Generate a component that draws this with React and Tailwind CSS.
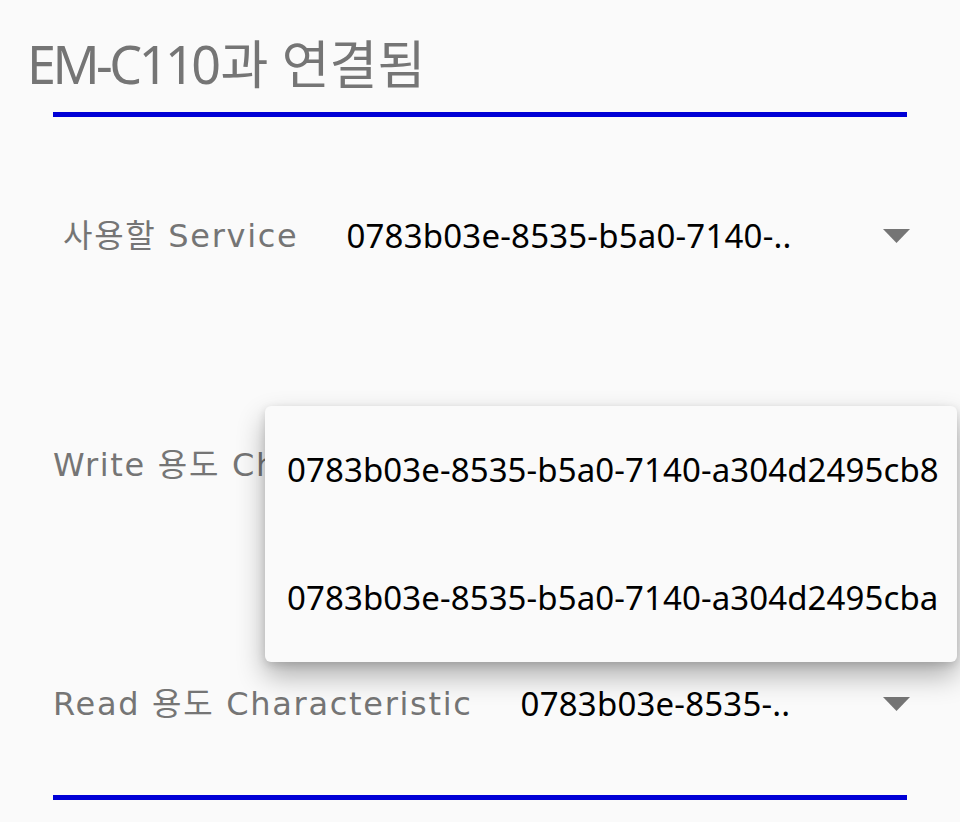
import React from "react";

function Arrow() {
  return (
    <svg width="27" height="14" viewBox="0 0 27 14" className="ml-auto shrink-0">
      <path d="M0 0 L27 0 L13.5 14 Z" fill="#757575" />
    </svg>
  );
}

function Row({ label, value, className, labelClass = "" }) {
  return (
    <div className={"flex items-center h-[70px] w-[857px] ml-[53px] " + className}>
      <span
        className={
          "text-[32px] leading-[70px] text-[#757575] tracking-[1.7px] whitespace-nowrap font-['DejaVu_Sans','Noto_Sans_CJK_KR',sans-serif] " +
          labelClass
        }
      >
        {label}
      </span>
      {value && (
        <span className="ml-[48px] text-[33px] leading-[70px] text-black tracking-[0.2px] whitespace-nowrap">
          {value}
        </span>
      )}
      <Arrow />
    </div>
  );
}

export default function App() {
  return (
    <div className="relative w-[960px] h-[822px] overflow-hidden bg-[#fafafa] font-['Noto_Sans','Noto_Sans_CJK_KR',sans-serif]">
      <div className="pt-[38px] pl-[27px] h-[90px]">
        <div className="text-[52px] leading-[52px] h-[52px] text-[#757575] whitespace-nowrap">
          <span className="tracking-[-3.5px]">EM-C110</span>
          <span className="ml-[3px]">과 연결됨</span>
        </div>
      </div>
      <div className="mt-[22px] ml-[53px] w-[854px] h-[5px] bg-[#0000d6]" />

      <Row className="mt-[84px]" labelClass="ml-[10px]" label="사용할 Service" value="0783b03e-8535-b5a0-7140-.." />
      <Row className="mt-[159px]" label="Write 용도 Characteristic" value="0783b03e-8535-.." />
      <Row className="mt-[169px]" label="Read 용도 Characteristic" value="0783b03e-8535-.." />

      <div className="mt-[56px] ml-[53px] w-[854px] h-[5px] bg-[#0000d6]" />

      <div className="absolute left-[265px] top-[406px] w-[692px] rounded-[6px] bg-[#fafafa] shadow-[0_14px_28px_rgba(0,0,0,0.3),0_3px_10px_rgba(0,0,0,0.14)]">
        {["0783b03e-8535-b5a0-7140-a304d2495cb8", "0783b03e-8535-b5a0-7140-a304d2495cba"].map((t) => (
          <div key={t} className="h-[128px] flex items-center pl-[22px] text-[33px] text-black tracking-[0.1px] whitespace-nowrap">
            {t}
          </div>
        ))}
      </div>
    </div>
  );
}
